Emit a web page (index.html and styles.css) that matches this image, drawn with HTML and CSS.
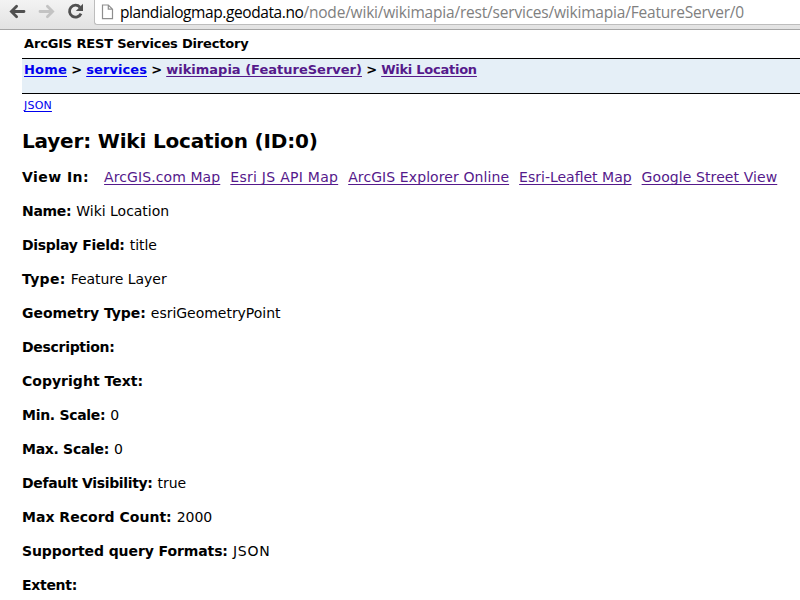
FILE: index.html
```html
<!DOCTYPE html>
<html lang="en">
<head>
<meta charset="utf-8">
<title>Layer: Wiki Location (ID:0)</title>
<link rel="stylesheet" href="styles.css">
</head>
<body>
<header class="toolbar">
  <svg class="controls" width="92" height="24" viewBox="0 0 92 24">
    <path d="M24 11.5H12M16.6 6.3l-5.2 5.2 5.2 5.2" fill="none" stroke="#505050" stroke-width="2.8" stroke-linecap="round"/>
    <path d="M40 11.5h12M47.4 6.3l5.2 5.2-5.2 5.2" fill="none" stroke="#c3c3c3" stroke-width="2.8" stroke-linecap="round"/>
    <path d="M80 7.2A6 6 0 1 0 81 13.6" fill="none" stroke="#505050" stroke-width="2.8"/>
    <path d="M83 3.8v7.2h-7.2z" fill="#505050"/>
  </svg>
  <div class="omnibox">
    <svg class="page-icon" width="13" height="16" viewBox="0 0 13 16">
      <path d="M1.5 1h5.8L11.5 5.2V14.6H1.5zM7.3 1v4.2h4.2" fill="#fff" stroke="#8e8e8e" stroke-width="1.2"/>
    </svg>
    <div class="url"><span class="host">plandialogmap.geodata.no</span><span class="path">/node/wiki/wikimapia/rest/services/wikimapia/FeatureServer/0</span></div>
  </div>
</header>
<main>
  <div class="site-title">ArcGIS REST Services Directory</div>
  <nav class="crumbs"><a class="new home" href="#">Home</a> &gt; <a class="new services" href="#">services</a> &gt; <a class="service" href="#">wikimapia (FeatureServer)</a> &gt; <a href="#">Wiki Location</a></nav>
  <div class="formats"><a class="new" href="#">JSON</a></div>
  <h1>Layer: Wiki Location (ID:0)</h1>
  <div class="row views"><b>View In:</b><a href="#">ArcGIS.com Map</a><a class="wide" href="#">Esri JS API Map</a><a href="#">ArcGIS Explorer Online</a><a class="snug" href="#">Esri-Leaflet Map</a><a href="#">Google Street View</a></div>
  <div class="row"><b>Name:</b><span>Wiki Location</span></div>
  <div class="row"><b>Display Field:</b><span>title</span></div>
  <div class="row type"><b>Type:</b><span>Feature Layer</span></div>
  <div class="row geometry"><b>Geometry Type:</b><span>esriGeometryPoint</span></div>
  <div class="row"><b>Description:</b></div>
  <div class="row loose"><b>Copyright Text:</b></div>
  <div class="row"><b>Min. Scale:</b><span>0</span></div>
  <div class="row"><b>Max. Scale:</b><span>0</span></div>
  <div class="row visibility"><b>Default Visibility:</b><span>true</span></div>
  <div class="row loose"><b>Max Record Count:</b><span>2000</span></div>
  <div class="row query"><b>Supported query Formats:</b><span>JSON</span></div>
  <div class="row"><b>Extent:</b></div>
</main>
</body>
</html>
```
FILE: styles.css
```css
* { box-sizing: border-box; }
body {
  margin: 0;
  height: 600px;
  overflow: hidden;
  background: #fff;
  color: #000;
  font-family: Verdana, "DejaVu Sans", sans-serif;
  font-size: 14px;
}
a { color: #551a8b; text-decoration: underline; text-underline-offset: 2px; text-decoration-thickness: 1px; text-decoration-skip-ink: none; }
a.new { color: #0000ee; }
.toolbar {
  display: flex;
  height: 30px;
  background: linear-gradient(#f3f3f3, #e2e2e2);
  border-bottom: 1px solid #a6a6a6;
}
.controls { flex: none; margin-right: 2px; }
.omnibox {
  flex: 1;
  display: flex;
  height: 25px;
  background: #fff;
  border-left: 1px solid #bdbdbd;
  border-bottom: 1px solid #bdbdbd;
  border-bottom-left-radius: 3px;
}
.page-icon { flex: none; margin: 4px 6px 0 6px; }
.url {
  font: 15.5px/24px "Open Sans", sans-serif;
  white-space: nowrap;
}
.host { letter-spacing: -0.41px; }
.path { color: #808080; letter-spacing: -0.2px; }
main { padding-left: 22px; white-space: nowrap; }
.site-title { height: 28px; padding-left: 2px; font-size: 13px; font-weight: bold; line-height: 28px; letter-spacing: -0.17px; }
.crumbs {
  height: 36px;
  padding-left: 2px;
  background: #e5eff7;
  border-top: 1px solid #000;
  border-bottom: 1px solid #000;
  font-size: 13px;
  font-weight: bold;
  line-height: 21px;
  letter-spacing: -0.25px;
}
.crumbs .home { letter-spacing: 0.2px; }
.crumbs .services { letter-spacing: 0.08px; }
.crumbs .service { letter-spacing: 0; }
.formats { height: 24px; padding-left: 2px; font-size: 11px; line-height: 24px; letter-spacing: 0.2px; }
h1 { margin: 0; height: 42px; font-size: 20px; line-height: 46px; letter-spacing: -0.18px; }
.row { display: flex; gap: 5px; height: 34px; line-height: 34px; }
.row b { letter-spacing: -0.3px; }
.row span { letter-spacing: -0.03px; }
.row.views { gap: 10px; }
.views b { margin-right: 5px; letter-spacing: 0.45px; }
.views a { letter-spacing: 0.09px; }
.views .wide { letter-spacing: 0.27px; }
.views .snug { letter-spacing: 0; }
.type b { letter-spacing: 0.3px; }
.geometry b { letter-spacing: -0.04px; }
.loose b { letter-spacing: 0.02px; }
.visibility b { letter-spacing: -0.36px; }
.query b { letter-spacing: -0.1px; }
.query span { letter-spacing: 0.8px; }
```
